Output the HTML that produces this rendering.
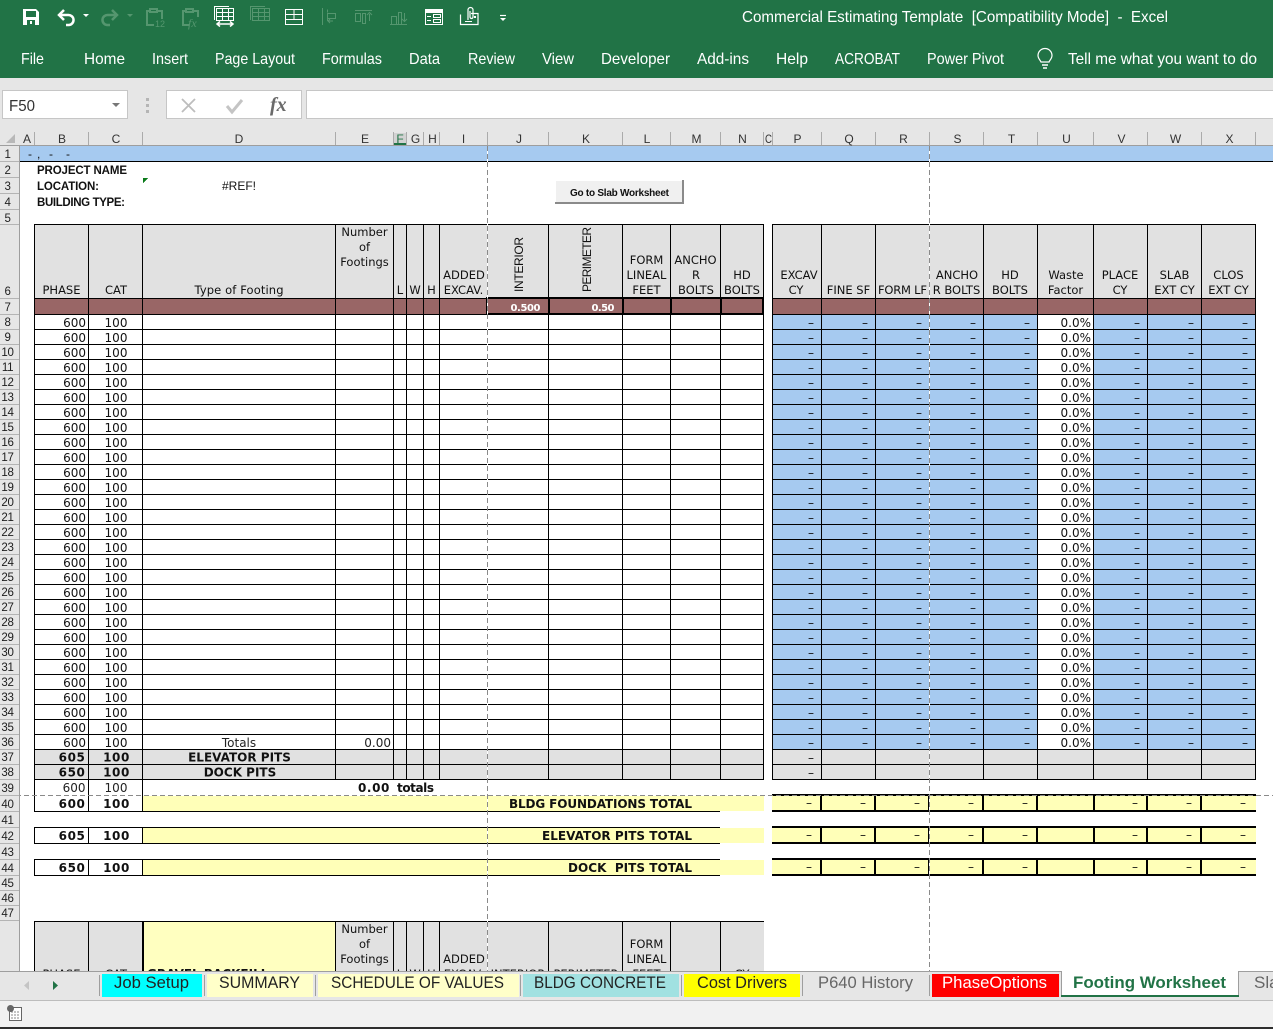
<!DOCTYPE html>
<html><head><meta charset="utf-8"><title>Footing Worksheet</title>
<style>
html,body{margin:0;padding:0;background:#fff}
#p{position:relative;width:1273px;height:1029px;overflow:hidden;background:#fff}
svg{position:absolute;left:0;top:0}
.c{position:absolute;font:12px/15px "DejaVu Sans",sans-serif;color:#111;top:316px}
.r{text-align:right}.m{text-align:center}
.t{position:absolute;font:12px/32px "DejaVu Sans",sans-serif;color:#111;top:787px;width:7px;text-align:right}
.d{width:7px;text-align:right}
.rn{position:absolute;left:0;width:15px;top:316px;font:11.5px/15px "Liberation Sans",sans-serif;letter-spacing:-.3px;color:#222;text-align:center}
.y{position:absolute;background:#ffffb8}
.h{font:11.5px "DejaVu Sans",sans-serif;fill:#111;text-anchor:middle}
.b{font:bold 12px "DejaVu Sans",sans-serif;fill:#111}
.n{font:12px "DejaVu Sans",sans-serif;fill:#222}
.l{font:bold 11.5px "Liberation Sans",sans-serif;fill:#111}
.rh{font:11.5px "Liberation Sans",sans-serif;fill:#222;text-anchor:middle;letter-spacing:-.3px}
.ch{font:12px "Liberation Sans",sans-serif;fill:#333;text-anchor:middle}
.rb{font:16px "Liberation Sans",sans-serif;fill:#fff}
.tb{font:17px "Liberation Sans",sans-serif;fill:#222}
</style></head><body><div id="p">

<div class="y" style="left:143px;top:796px;width:621px;height:15px"></div>
<div class="y" style="left:143px;top:828px;width:621px;height:15px"></div>
<div class="y" style="left:143px;top:860px;width:621px;height:15px"></div>
<div class="y" style="left:772px;top:796px;width:484px;height:15px"></div>
<div class="y" style="left:772px;top:828px;width:484px;height:15px"></div>
<div class="y" style="left:772px;top:860px;width:484px;height:15px"></div>

<svg width="1273" height="1029" shape-rendering="crispEdges">
<defs>
<pattern id="hl" width="1" height="15" patternUnits="userSpaceOnUse" y="315"><rect y="14" width="1" height="1" fill="#000"/></pattern>
<pattern id="rl" width="1" height="15" patternUnits="userSpaceOnUse" y="315"><rect y="14" width="1" height="1" fill="#b4b4b4"/></pattern>
<pattern id="dv" width="1" height="8" patternUnits="userSpaceOnUse" y="146"><rect width="1" height="8" fill="#fff"/><rect width="1" height="5" fill="#8a8a8a"/></pattern>
<pattern id="dh" width="8" height="1" patternUnits="userSpaceOnUse" y="795"><rect width="5" height="1" fill="#8a8a8a"/></pattern>
</defs>

<!-- fills -->
<rect x="19" y="146" width="1254" height="15" fill="#a6caf0"/>
<rect x="19" y="161" width="1254" height="1" fill="#000"/>
<rect x="34" y="224" width="730" height="74" fill="#e1e1e1"/>
<rect x="772" y="224" width="484" height="74" fill="#e1e1e1"/>
<rect x="34" y="298" width="730" height="16" fill="#996666"/>
<rect x="772" y="298" width="484" height="16" fill="#996666"/>
<rect x="772" y="315" width="265" height="434" fill="#a6caf0"/>
<rect x="1093" y="315" width="163" height="434" fill="#a6caf0"/>
<rect x="34" y="749" width="730" height="30" fill="#e1e1e1"/>
<rect x="772" y="749" width="484" height="30" fill="#e1e1e1"/>
<rect x="34" y="921" width="730" height="50" fill="#e1e1e1"/>
<rect x="143" y="922" width="192" height="49" fill="#ffffc0"/>

<!-- horizontal grid -->
<rect x="34" y="315" width="730" height="465" fill="url(#hl)"/>
<rect x="772" y="315" width="484" height="465" fill="url(#hl)"/>
<rect x="34" y="224" width="730" height="1" fill="#000"/>
<rect x="772" y="224" width="484" height="1" fill="#000"/>
<rect x="34" y="298" width="453" height="1" fill="#000"/>
<rect x="34" y="314" width="453" height="1" fill="#000"/>
<rect x="772" y="298" width="484" height="1" fill="#000"/>
<rect x="772" y="314" width="484" height="1" fill="#000"/>
<rect x="486" y="297" width="278" height="2" fill="#000"/>
<rect x="486" y="313" width="278" height="2" fill="#000"/>

<!-- vertical left table -->
<g fill="#000">
<rect x="34" y="224" width="1" height="587"/><rect x="88" y="224" width="1" height="587"/><rect x="142" y="224" width="1" height="587"/>
<rect x="335" y="224" width="1" height="555"/><rect x="393" y="224" width="1" height="555"/><rect x="406" y="224" width="1" height="555"/><rect x="423" y="224" width="1" height="555"/><rect x="439" y="224" width="1" height="555"/>
<rect x="548" y="224" width="1" height="555"/><rect x="622" y="224" width="1" height="555"/><rect x="670" y="224" width="1" height="555"/><rect x="720" y="224" width="1" height="555"/><rect x="763" y="224" width="1" height="555"/>
<rect x="486" y="297" width="2" height="18"/><rect x="548" y="297" width="2" height="18"/><rect x="622" y="297" width="2" height="18"/><rect x="670" y="297" width="2" height="18"/><rect x="720" y="297" width="2" height="18"/><rect x="762" y="297" width="2" height="18"/>
<!-- vertical right table -->
<rect x="772" y="224" width="1" height="555"/><rect x="821" y="224" width="1" height="555"/><rect x="875" y="224" width="1" height="555"/><rect x="929" y="224" width="1" height="555"/><rect x="983" y="224" width="1" height="555"/><rect x="1037" y="224" width="1" height="555"/><rect x="1093" y="224" width="1" height="555"/><rect x="1147" y="224" width="1" height="555"/><rect x="1201" y="224" width="1" height="555"/><rect x="1255" y="224" width="1" height="555"/>
<!-- totals rows -->
<rect x="34" y="811" width="686" height="1"/>
<rect x="34" y="827" width="686" height="1"/><rect x="34" y="843" width="686" height="1"/>
<rect x="34" y="859" width="686" height="1"/><rect x="34" y="875" width="686" height="1"/>
<rect x="34" y="827" width="1" height="16"/><rect x="88" y="827" width="1" height="16"/><rect x="142" y="827" width="1" height="16"/>
<rect x="34" y="859" width="1" height="16"/><rect x="88" y="859" width="1" height="16"/><rect x="142" y="859" width="1" height="16"/>
<rect x="772" y="794" width="484" height="2"/><rect x="772" y="810" width="484" height="2"/>
<rect x="772" y="826" width="484" height="2"/><rect x="772" y="842" width="484" height="2"/>
<rect x="772" y="858" width="484" height="2"/><rect x="772" y="874" width="484" height="2"/>
<g id="tv">
<rect x="820" y="794" width="2" height="18"/><rect x="874" y="794" width="2" height="18"/><rect x="928" y="794" width="2" height="18"/><rect x="982" y="794" width="2" height="18"/><rect x="1036" y="794" width="2" height="18"/><rect x="1093" y="794" width="2" height="18"/><rect x="1146" y="794" width="2" height="18"/><rect x="1200" y="794" width="2" height="18"/>
<rect x="820" y="826" width="2" height="18"/><rect x="874" y="826" width="2" height="18"/><rect x="928" y="826" width="2" height="18"/><rect x="982" y="826" width="2" height="18"/><rect x="1036" y="826" width="2" height="18"/><rect x="1093" y="826" width="2" height="18"/><rect x="1146" y="826" width="2" height="18"/><rect x="1200" y="826" width="2" height="18"/>
<rect x="820" y="858" width="2" height="18"/><rect x="874" y="858" width="2" height="18"/><rect x="928" y="858" width="2" height="18"/><rect x="982" y="858" width="2" height="18"/><rect x="1036" y="858" width="2" height="18"/><rect x="1093" y="858" width="2" height="18"/><rect x="1146" y="858" width="2" height="18"/><rect x="1200" y="858" width="2" height="18"/>
</g>
<!-- bottom table -->
<rect x="34" y="921" width="730" height="1"/>
<rect x="34" y="921" width="1" height="50"/><rect x="88" y="921" width="1" height="50"/><rect x="142" y="921" width="2" height="50"/><rect x="335" y="921" width="1" height="50"/><rect x="393" y="921" width="1" height="50"/><rect x="406" y="921" width="1" height="50"/><rect x="423" y="921" width="1" height="50"/><rect x="439" y="921" width="1" height="50"/><rect x="548" y="921" width="1" height="50"/><rect x="622" y="921" width="1" height="50"/><rect x="670" y="921" width="1" height="50"/><rect x="720" y="921" width="1" height="50"/>
</g>

<!-- page-break dashes -->
<rect x="487" y="146" width="1" height="825" fill="url(#dv)"/>
<rect x="929" y="146" width="1" height="825" fill="url(#dv)"/>
<rect x="20" y="795" width="1253" height="1" fill="url(#dh)"/>

<!-- green comment triangle -->
<path d="M143 178h5l-5 5z" fill="#0a7a1a"/>

<!-- header cells -->
<g shape-rendering="auto">
<text class="h" x="61.5" y="294">PHASE</text><text class="h" x="116" y="294">CAT</text>
<text class="h" x="239" y="294" textLength="89">Type of Footing</text>
<text class="h" x="364.5" y="236">Number</text><text class="h" x="364.5" y="251">of</text><text class="h" x="364.5" y="266">Footings</text>
<text class="h" x="400" y="294">L</text><text class="h" x="415" y="294">W</text><text class="h" x="431.5" y="294">H</text>
<text class="h" x="464" y="279">ADDED</text><text class="h" x="463.5" y="294">EXCAV.</text>
<text transform="translate(523 292) rotate(-90)" style="font:12px 'Liberation Sans',sans-serif" fill="#111" textLength="55">INTERIOR</text>
<text transform="translate(591 292) rotate(-90)" style="font:12px 'Liberation Sans',sans-serif" fill="#111" textLength="65">PERIMETER</text>
<text class="h" x="646.5" y="264">FORM</text><text class="h" x="646.5" y="279">LINEAL</text><text class="h" x="646.5" y="294">FEET</text>
<text class="h" x="695.5" y="264">ANCHO</text><text class="h" x="696" y="279">R</text><text class="h" x="696" y="294">BOLTS</text>
<text class="h" x="742" y="279">HD</text><text class="h" x="742" y="294">BOLTS</text>
<text class="h" x="799" y="279">EXCAV</text><text class="h" x="796" y="294">CY</text>
<text class="h" x="848.5" y="294">FINE SF</text><text class="h" x="902.5" y="294" textLength="49">FORM LF</text>
<text class="h" x="957" y="279">ANCHO</text><text class="h" x="956.5" y="294">R BOLTS</text>
<text class="h" x="1010" y="279">HD</text><text class="h" x="1010" y="294">BOLTS</text>
<text class="h" x="1066" y="279">Waste</text><text class="h" x="1065.5" y="294">Factor</text>
<text class="h" x="1120" y="279">PLACE</text><text class="h" x="1120" y="294">CY</text>
<text class="h" x="1174.5" y="279">SLAB</text><text class="h" x="1174.5" y="294">EXT CY</text>
<text class="h" x="1228.5" y="279">CLOS</text><text class="h" x="1228.5" y="294">EXT CY</text>
<text class="b" x="510.500" y="311" textLength="30" style="fill:#fff;font-size:10px">0.500</text>
<text class="b" x="591.500" y="311" textLength="23" style="fill:#fff;font-size:10px">0.50</text>

<!-- top labels -->
<text class="l" x="37" y="174" textLength="90">PROJECT NAME</text>
<text class="l" x="37" y="190" textLength="62">LOCATION:</text>
<text class="l" x="37" y="206" textLength="88">BUILDING TYPE:</text>
<text x="222" y="190" style="font:12px 'Liberation Sans',sans-serif" fill="#111">#REF!</text>
<text x="28" y="158" style="font:12px 'Liberation Sans',sans-serif" fill="#111">-</text><text x="37" y="158" style="font:12px 'Liberation Sans',sans-serif" fill="#111">,</text><text x="49" y="158" style="font:12px 'Liberation Sans',sans-serif" fill="#111">-</text><text x="66" y="158" style="font:12px 'Liberation Sans',sans-serif" fill="#111">-</text>

<!-- lower labels -->
<text class="n" x="239" y="747" text-anchor="middle">Totals</text>
<text class="n" x="391" y="747" text-anchor="end">0.00</text>
<text class="b" x="239.5" y="761.5" text-anchor="middle">ELEVATOR PITS</text>
<text class="b" x="240" y="776.5" text-anchor="middle">DOCK PITS</text>
<text class="b" x="85.5" y="761.5" text-anchor="end" letter-spacing=".6">605</text><text class="b" x="116.5" y="761.5" text-anchor="middle" letter-spacing=".6">100</text>
<text class="b" x="85.5" y="776.5" text-anchor="end" letter-spacing=".6">650</text><text class="b" x="116.5" y="776.5" text-anchor="middle" letter-spacing=".6">100</text>
<text class="n" x="85.5" y="792" text-anchor="end">600</text><text class="n" x="116" y="792" text-anchor="middle">100</text>
<text class="b" x="390" y="792" text-anchor="end" letter-spacing=".6">0.00</text><text class="b" x="397" y="792" textLength="37">totals</text>
<text class="b" x="85.5" y="808" text-anchor="end" letter-spacing=".6">600</text><text class="b" x="116.5" y="808" text-anchor="middle" letter-spacing=".6">100</text>
<text class="b" x="85.5" y="840" text-anchor="end" letter-spacing=".6">605</text><text class="b" x="116.5" y="840" text-anchor="middle" letter-spacing=".6">100</text>
<text class="b" x="85.5" y="872" text-anchor="end" letter-spacing=".6">650</text><text class="b" x="116.5" y="872" text-anchor="middle" letter-spacing=".6">100</text>
<text class="b" x="509" y="808" textLength="183">BLDG FOUNDATIONS TOTAL</text>
<text class="b" x="542" y="840" textLength="150">ELEVATOR PITS TOTAL</text>
<text class="b" x="568" y="872" textLength="124" xml:space="preserve">DOCK  PITS TOTAL</text>

<!-- second header -->
<text class="h" x="364.5" y="933">Number</text><text class="h" x="364.5" y="948">of</text><text class="h" x="364.5" y="963">Footings</text>
<text class="h" x="464" y="963">ADDED</text><text class="h" x="463.5" y="978">EXCAV.</text>
<text class="h" x="646.5" y="948">FORM</text><text class="h" x="646.5" y="963">LINEAL</text><text class="h" x="646.5" y="978">FEET</text>
<text class="h" x="61.5" y="978">PHASE</text><text class="h" x="116" y="978">CAT</text>
<text class="b" x="147" y="978">GRAVEL BACKFILL</text>
<text class="h" x="400" y="978">L</text><text class="h" x="415" y="978">W</text><text class="h" x="431.5" y="978">H</text>
<text class="h" x="518" y="978">INTERIOR</text><text class="h" x="586" y="978">PERIMETER</text><text class="h" x="742" y="978">CY</text>
</g>

<!-- button -->
<rect x="555" y="180" width="129" height="24" fill="#8a8a8a"/>
<rect x="555" y="180" width="127" height="22" fill="#fff"/>
<rect x="556" y="181" width="126" height="21" fill="#f0f0f0"/>
<text x="619.5" y="196" text-anchor="middle" textLength="99" style="font:bold 10px 'Liberation Sans',sans-serif" fill="#111" shape-rendering="auto">Go to Slab Worksheet</text>
</svg>

<!-- data columns -->
<div class="c r" style="left:46px;width:40px">600 600 600 600 600 600 600 600 600 600 600 600 600 600 600 600 600 600 600 600 600 600 600 600 600 600 600 600 600</div>
<div class="c m" style="left:96px;width:40px">100 100 100 100 100 100 100 100 100 100 100 100 100 100 100 100 100 100 100 100 100 100 100 100 100 100 100 100 100</div>
<div class="c d" style="left:807px">– – – – – – – – – – – – – – – – – – – – – – – – – – – – – – –</div>
<div class="c d" style="left:861px">– – – – – – – – – – – – – – – – – – – – – – – – – – – – –</div>
<div class="c d" style="left:915px">– – – – – – – – – – – – – – – – – – – – – – – – – – – – –</div>
<div class="c d" style="left:969px">– – – – – – – – – – – – – – – – – – – – – – – – – – – – –</div>
<div class="c d" style="left:1023px">– – – – – – – – – – – – – – – – – – – – – – – – – – – – –</div>
<div class="c r" style="left:1059px;width:32px">0.0% 0.0% 0.0% 0.0% 0.0% 0.0% 0.0% 0.0% 0.0% 0.0% 0.0% 0.0% 0.0% 0.0% 0.0% 0.0% 0.0% 0.0% 0.0% 0.0% 0.0% 0.0% 0.0% 0.0% 0.0% 0.0% 0.0% 0.0% 0.0%</div>
<div class="c d" style="left:1133px">– – – – – – – – – – – – – – – – – – – – – – – – – – – – –</div>
<div class="c d" style="left:1187px">– – – – – – – – – – – – – – – – – – – – – – – – – – – – –</div>
<div class="c d" style="left:1241px">– – – – – – – – – – – – – – – – – – – – – – – – – – – – –</div>
<div class="t" style="left:805px">– – –</div><div class="t" style="left:859px">– – –</div><div class="t" style="left:913px">– – –</div><div class="t" style="left:967px">– – –</div><div class="t" style="left:1021px">– – –</div><div class="t" style="left:1131px">– – –</div><div class="t" style="left:1185px">– – –</div><div class="t" style="left:1239px">– – –</div>
<div class="rn">8 9 10 11 12 13 14 15 16 17 18 19 20 21 22 23 24 25 26 27 28 29 30 31 32 33 34 35 36 37 38</div>

<!-- chrome -->
<svg width="1273" height="1029" style="pointer-events:none">
<g shape-rendering="crispEdges">
<rect x="0" y="0" width="1273" height="78" fill="#217346"/>
<rect x="0" y="78" width="1273" height="67" fill="#e6e6e6"/>
<rect x="2.5" y="90.5" width="125" height="28" fill="#fff" stroke="#c6c6c6"/>
<rect x="166.5" y="90.5" width="135" height="28" fill="#fff" stroke="#c6c6c6"/>
<rect x="306.5" y="90.5" width="967" height="28" fill="#fff" stroke="#c6c6c6"/>
<rect x="146" y="98" width="3" height="3" fill="#b5b5b5"/><rect x="146" y="104" width="3" height="3" fill="#b5b5b5"/><rect x="146" y="110" width="3" height="3" fill="#b5b5b5"/>
<!-- header lines -->
<rect x="0" y="145" width="1273" height="1" fill="#9e9e9e"/>
<rect x="393" y="133" width="14" height="12" fill="#d2d2d2"/>
<rect x="393" y="143" width="14" height="2" fill="#217346"/>
<g fill="#ababab">
<rect x="34" y="132" width="1" height="13"/><rect x="88" y="132" width="1" height="13"/><rect x="142" y="132" width="1" height="13"/><rect x="335" y="132" width="1" height="13"/><rect x="393" y="132" width="1" height="13"/><rect x="406" y="132" width="1" height="13"/><rect x="423" y="132" width="1" height="13"/><rect x="439" y="132" width="1" height="13"/><rect x="487" y="132" width="1" height="13"/><rect x="548" y="132" width="1" height="13"/><rect x="622" y="132" width="1" height="13"/><rect x="670" y="132" width="1" height="13"/><rect x="720" y="132" width="1" height="13"/><rect x="763" y="132" width="1" height="13"/><rect x="772" y="132" width="1" height="13"/><rect x="821" y="132" width="1" height="13"/><rect x="875" y="132" width="1" height="13"/><rect x="929" y="132" width="1" height="13"/><rect x="983" y="132" width="1" height="13"/><rect x="1037" y="132" width="1" height="13"/><rect x="1093" y="132" width="1" height="13"/><rect x="1147" y="132" width="1" height="13"/><rect x="1201" y="132" width="1" height="13"/><rect x="1255" y="132" width="1" height="13"/>
</g>
<!-- row header -->
<rect x="0" y="146" width="19" height="825" fill="#e6e6e6" style="mix-blend-mode:multiply"/>
<rect x="19" y="146" width="1" height="825" fill="#9e9e9e"/>
<rect x="0" y="315" width="19" height="465" fill="url(#rl)"/>
<g fill="#b4b4b4">
<rect x="0" y="161" width="19" height="1"/><rect x="0" y="177" width="19" height="1"/><rect x="0" y="193" width="19" height="1"/><rect x="0" y="209" width="19" height="1"/><rect x="0" y="224" width="19" height="1"/><rect x="0" y="298" width="19" height="1"/><rect x="0" y="314" width="19" height="1"/><rect x="0" y="795" width="19" height="1"/><rect x="0" y="811" width="19" height="1"/><rect x="0" y="827" width="19" height="1"/><rect x="0" y="843" width="19" height="1"/><rect x="0" y="859" width="19" height="1"/><rect x="0" y="875" width="19" height="1"/><rect x="0" y="890" width="19" height="1"/><rect x="0" y="905" width="19" height="1"/><rect x="0" y="920" width="19" height="1"/>
</g>
</g>
<path d="M15 134v9h-9z" fill="#b8b8b8"/>

<!-- row labels -->
<text class="rh" x="7.5" y="158">1</text><text class="rh" x="7.5" y="174">2</text><text class="rh" x="7.5" y="190">3</text><text class="rh" x="7.5" y="206">4</text><text class="rh" x="7.5" y="222">5</text><text class="rh" x="7.5" y="295">6</text><text class="rh" x="7.5" y="311">7</text><text class="rh" x="7.5" y="792">39</text><text class="rh" x="7.5" y="808">40</text><text class="rh" x="7.5" y="824">41</text><text class="rh" x="7.5" y="840">42</text><text class="rh" x="7.5" y="856">43</text><text class="rh" x="7.5" y="872">44</text><text class="rh" x="7.5" y="887">45</text><text class="rh" x="7.5" y="902">46</text><text class="rh" x="7.5" y="917">47</text>

<!-- column letters -->
<text class="ch" x="27" y="143">A</text><text class="ch" x="62" y="143">B</text><text class="ch" x="116" y="143">C</text><text class="ch" x="239" y="143">D</text><text class="ch" x="365" y="143">E</text><text class="ch" x="400" y="143" style="fill:#217346">F</text><text class="ch" x="415.500" y="143">G</text><text class="ch" x="432.500" y="143">H</text><text class="ch" x="463.500" y="143">I</text><text class="ch" x="519" y="143">J</text><text class="ch" x="586" y="143">K</text><text class="ch" x="647" y="143">L</text><text class="ch" x="696.500" y="143">M</text><text class="ch" x="742.500" y="143">N</text><text class="ch" x="768.500" y="143" textLength="7" lengthAdjust="spacingAndGlyphs">C</text><text class="ch" x="797.500" y="143">P</text><text class="ch" x="849" y="143">Q</text><text class="ch" x="903.500" y="143">R</text><text class="ch" x="957.500" y="143">S</text><text class="ch" x="1011.500" y="143">T</text><text class="ch" x="1066.500" y="143">U</text><text class="ch" x="1121.500" y="143">V</text><text class="ch" x="1175.500" y="143">W</text><text class="ch" x="1229.500" y="143">X</text>

<!-- title + ribbon -->
<text class="rb" x="742" y="22" textLength="426" lengthAdjust="spacingAndGlyphs" xml:space="preserve" style="font-size:15.5px">Commercial Estimating Template  [Compatibility Mode]  -  Excel</text>
<text class="rb" x="21" y="64" textLength="23" lengthAdjust="spacingAndGlyphs">File</text>
<text class="rb" x="84" y="64" textLength="41" lengthAdjust="spacingAndGlyphs">Home</text>
<text class="rb" x="152" y="64" textLength="36" lengthAdjust="spacingAndGlyphs">Insert</text>
<text class="rb" x="215" y="64" textLength="80" lengthAdjust="spacingAndGlyphs">Page Layout</text>
<text class="rb" x="322" y="64" textLength="60" lengthAdjust="spacingAndGlyphs">Formulas</text>
<text class="rb" x="409" y="64" textLength="31" lengthAdjust="spacingAndGlyphs">Data</text>
<text class="rb" x="468" y="64" textLength="47" lengthAdjust="spacingAndGlyphs">Review</text>
<text class="rb" x="542" y="64" textLength="32" lengthAdjust="spacingAndGlyphs">View</text>
<text class="rb" x="601" y="64" textLength="69" lengthAdjust="spacingAndGlyphs">Developer</text>
<text class="rb" x="697" y="64" textLength="52" lengthAdjust="spacingAndGlyphs">Add-ins</text>
<text class="rb" x="776" y="64" textLength="32" lengthAdjust="spacingAndGlyphs">Help</text>
<text class="rb" x="835" y="64" textLength="65" lengthAdjust="spacingAndGlyphs">ACROBAT</text>
<text class="rb" x="927" y="64" textLength="77" lengthAdjust="spacingAndGlyphs">Power Pivot</text>
<text class="rb" x="1068" y="64" textLength="189" lengthAdjust="spacingAndGlyphs">Tell me what you want to do</text>
<!-- bulb -->
<path d="M1041 62c-.8-2-3-3.500-3-6.500a7 7 0 0 1 14 0c0 3-2.200 4.500-3 6.500z" fill="none" stroke="#fff" stroke-width="1.200"/>
<path d="M1042 65h6M1043 68h4" stroke="#fff" stroke-width="1.500" fill="none"/>

<!-- QAT -->
<path fill="#fff" fill-rule="evenodd" d="M23 9h13l3 3v13H23zM26 11v6h10v-6zM27 20v5h8v-5zM30 21h2v3h-2z"/>
<path d="M60 15h8a5 5 0 0 1 1 10h-3" fill="none" stroke="#fff" stroke-width="2.500"/>
<path d="M64 10l-5 5 5 5" fill="none" stroke="#fff" stroke-width="2.500"/>
<path d="M83 14h6l-3 3z" fill="#fff"/>
<path d="M116 15h-8a5 5 0 0 0-1 10h3" fill="none" stroke="#55966f" stroke-width="2.500"/>
<path d="M112 10l5 5-5 5" fill="none" stroke="#55966f" stroke-width="2.500"/>
<path d="M127 14h6l-3 3z" fill="#55966f"/>
<g fill="none" stroke="#55966f" stroke-width="2">
<path d="M151 11h-4v14h7M158 11h4v8M150 9h7v3h-7z"/>
<path d="M187 11h-4v14h6M194 11h4v6M186 9h7v3h-7z"/>
</g>
<text x="155" y="27" style="font:9px 'Liberation Sans',sans-serif" fill="#55966f">12</text>
<text x="188" y="27" style="font:italic 12px 'Liberation Serif',serif" fill="#55966f">fx</text>
<g fill="none" stroke="#fff" shape-rendering="crispEdges">
<path d="M214.500 20V6.500H229M216.500 21V8.500h17V21M222.500 9v12M228.500 9v12M217 12.500h16M217 16.500h16M217 20.500h16"/>
<path d="M285.500 9.500h17v15h-17zM286 14.500h16M286 19.500h16M294 10v9"/>
</g>
<path d="M218 24h14M220 21.500l-3 2.500 3 2.500M230 21.500l3 2.500-3 2.500" fill="none" stroke="#fff" stroke-width="1.500"/>
<g fill="none" stroke="#55966f" shape-rendering="crispEdges">
<path d="M250.500 20V6.500H265M252.500 21V8.500h17V21M258.500 9v12M264.500 9v12M253 12.500h16M253 16.500h16M253 20.500h16"/>
<path d="M322.500 8v17M327.500 13.500h8v5h-8zM327.500 9.500v3M327.500 19v2"/>
<path d="M355 10.500h17M355.500 13.500h5v8h-5zM362.500 13.500h3v10h-3zM369.500 14v7"/>
<path d="M390 24.500h17M391.500 16.500h5v8h-5zM398.500 12.500h3v12h-3zM404.500 13v8"/>
</g>
<path d="M333 21h-5M330 19l-2 2 2 2M367 15l2.500-2.500 2.500 2.500M402 19l2.500 2.500 2.500-2.500" fill="none" stroke="#55966f"/>
<g shape-rendering="crispEdges">
<rect x="425" y="9" width="18" height="16" fill="#fff"/>
<rect x="426" y="13" width="16" height="11" fill="#217346"/>
<path d="M427 16.500h4M427 20.500h4" stroke="#fff"/>
<rect x="433.500" y="14.500" width="7" height="3" fill="none" stroke="#fff"/>
<rect x="433.500" y="19.500" width="7" height="3" fill="none" stroke="#fff"/>
</g>
<path d="M460.500 14.500v10h17.500v-11h-7" fill="none" stroke="#fff" stroke-width="1.200"/>
<path d="M468 20V10a2.500 2.500 0 0 1 5 0v7a1.500 1.500 0 0 1-3 0v-6" fill="none" stroke="#fff" stroke-width="1.200"/>
<path d="M465 21.500h7" stroke="#fff"/>
<rect x="474" y="16" width="2" height="2" fill="#fff"/>
<path d="M500 15.500h6" stroke="#fff" stroke-width="1.200"/>
<path d="M500 18h6l-3 3z" fill="#fff"/>

<!-- name box & formula icons -->
<text x="9" y="111" textLength="26" lengthAdjust="spacingAndGlyphs" style="font:15.5px 'Liberation Sans',sans-serif" fill="#333">F50</text>
<path d="M112 103h8l-4 4z" fill="#777"/>
<path d="M182 99l13 13M195 99l-13 13" stroke="#bdbdbd" stroke-width="1.800" fill="none"/>
<path d="M227 106l5 6 10-12" stroke="#c4c4c4" stroke-width="3" fill="none"/>
<text x="270" y="111" style="font:italic bold 20px 'Liberation Serif',serif" fill="#6a6a6a">fx</text>

<!-- sheet tabs -->
<g shape-rendering="crispEdges">
<rect x="0" y="971" width="1273" height="30" fill="#e6e6e6"/>
<rect x="0" y="971" width="1273" height="1" fill="#9e9e9e"/>
<rect x="0" y="1000" width="1273" height="1" fill="#bdbdbd"/>
<rect x="0" y="1001" width="1273" height="26" fill="#f1f1f1"/>
<rect x="0" y="1027" width="1273" height="2" fill="#2e2e2e"/>
<rect x="102" y="974" width="100" height="23" fill="#00ffff"/>
<rect x="207" y="974" width="106" height="23" fill="#ffffc9"/>
<rect x="318" y="974" width="201" height="23" fill="#ffffc9"/>
<rect x="523" y="974" width="156" height="23" fill="#a1e1e1"/>
<rect x="684" y="974" width="116" height="23" fill="#ffff00"/>
<rect x="932" y="974" width="127" height="23" fill="#ff0000"/>
<rect x="1061" y="971" width="178" height="26" fill="#fff"/>
<rect x="1061" y="971" width="1" height="24" fill="#9e9e9e"/>
<rect x="1238" y="971" width="1" height="24" fill="#9e9e9e"/>
<rect x="1061" y="995" width="178" height="2" fill="#217346"/>
<g fill="#9e9e9e"><rect x="99" y="975" width="1" height="21"/><rect x="204" y="975" width="1" height="21"/><rect x="315" y="975" width="1" height="21"/><rect x="520" y="975" width="1" height="21"/><rect x="681" y="975" width="1" height="21"/><rect x="802" y="975" width="1" height="21"/><rect x="929" y="975" width="1" height="21"/></g>
</g>
<path d="M29 981v9l-5-4.500z" fill="#c4c4c4"/>
<path d="M53 981v9l5-4.500z" fill="#217346"/>
<text class="tb" x="114" y="988" textLength="75" lengthAdjust="spacingAndGlyphs">Job Setup</text>
<text class="tb" x="219" y="988" textLength="81" lengthAdjust="spacingAndGlyphs">SUMMARY</text>
<text class="tb" x="331" y="988" textLength="173" lengthAdjust="spacingAndGlyphs">SCHEDULE OF VALUES</text>
<text class="tb" x="534" y="988" textLength="132" lengthAdjust="spacingAndGlyphs">BLDG CONCRETE</text>
<text class="tb" x="697" y="988" textLength="90" lengthAdjust="spacingAndGlyphs">Cost Drivers</text>
<text class="tb" x="818" y="988" textLength="95" lengthAdjust="spacingAndGlyphs" style="fill:#666">P640 History</text>
<text class="tb" x="942" y="988" textLength="105" lengthAdjust="spacingAndGlyphs" style="fill:#fff">PhaseOptions</text>
<text class="tb" x="1073" y="988" textLength="153" lengthAdjust="spacingAndGlyphs" style="fill:#217346;font-weight:bold">Footing Worksheet</text>
<text class="tb" x="1254" y="988" style="fill:#666">Slab</text>

<!-- status icon -->
<g shape-rendering="crispEdges">
<rect x="9.500" y="1007.500" width="12" height="13" fill="#fff" stroke="#666"/>
<path d="M11 1012h9M11 1015h9M11 1018h9" stroke="#888" stroke-dasharray="2 1"/>
</g>
<circle cx="10.500" cy="1008.500" r="3.500" fill="#666"/>
</svg>
</div></body></html>
